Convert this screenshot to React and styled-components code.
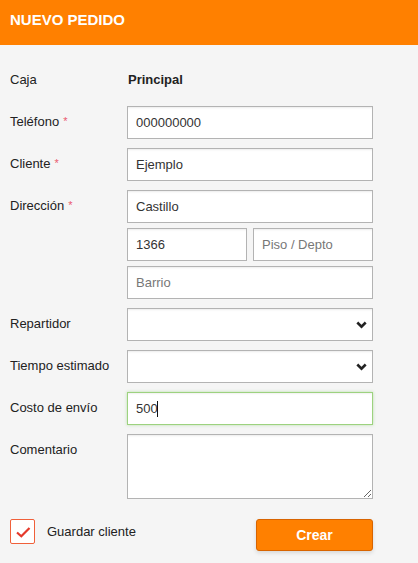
import React from "react";
import styled, { createGlobalStyle } from "styled-components";

const Global = createGlobalStyle`
  html, body { margin: 0; padding: 0; background: #f5f5f5; }
  body { font-family: "Liberation Sans", Arial, sans-serif; }
  * { box-sizing: border-box; }
`;

const Page = styled.div`
  width: 418px;
  min-height: 563px;
  background: #f5f5f5;
`;

const Header = styled.header`
  height: 45px;
  background: #ff8000;
  padding: 11px 10px 0;
`;

const Title = styled.h1`
  margin: 0;
  font-size: 15px;
  font-weight: bold;
  color: #fff;
  letter-spacing: 0;
`;

const Form = styled.form`
  padding: 19px 45px 0 10px;
  display: flex;
  flex-direction: column;
  gap: 9px;
`;

const Row = styled.div`
  display: grid;
  grid-template-columns: 117px 246px;
  align-items: start;
`;

const Label = styled.label`
  padding-top: 8px;
  font-size: 13px;
  color: #222;
`;

const Req = styled.span`
  color: #ea5a6e;
  font-size: 11px;
  margin-left: 4px;
  vertical-align: 1px;
`;

const Value = styled.div`
  padding: 8px 0 0 1px;
  height: 33px;
  font-size: 13px;
  font-weight: bold;
  color: #222;
`;

const Stack = styled.div`
  display: flex;
  flex-direction: column;
  gap: 5px;
`;

const Pair = styled.div`
  display: grid;
  grid-template-columns: 120px 120px;
  gap: 6px;
`;

const Field = styled.input`
  width: 100%;
  height: 33px;
  padding: 0 8px;
  border: 1px solid ${(p) => (p.$focus ? "#9dd27f" : "#b3b3b3")};
  background: #fff;
  box-shadow: ${(p) =>
    p.$focus
      ? "0 0 3px rgba(120, 200, 90, 0.45), inset 0 2px 2px -1px rgba(0,0,0,0.06)"
      : "inset 0 3px 2px -2px rgba(0,0,0,0.08)"};
  font-family: "Liberation Sans", Arial, sans-serif;
  font-size: 13px;
  color: #333;
  outline: none;
  border-radius: 0;
  &::placeholder { color: #777; }
`;

const FieldWrap = styled.div`
  position: relative;
`;

const Caret = styled.span`
  position: absolute;
  left: 30px;
  top: 9px;
  width: 1px;
  height: 16px;
  background: #111;
`;

const Select = styled.select`
  width: 100%;
  height: 33px;
  padding: 0 8px;
  border: 1px solid #b3b3b3;
  background: #fff;
  box-shadow: inset 0 3px 2px -2px rgba(0,0,0,0.08);
  appearance: none;
  -webkit-appearance: none;
  border-radius: 0;
  font-family: "Liberation Sans", Arial, sans-serif;
  font-size: 13px;
  outline: none;
`;

const Chevron = styled.svg`
  position: absolute;
  right: 6px;
  top: 13px;
  width: 11px;
  height: 8px;
  pointer-events: none;
`;

const Area = styled.textarea`
  width: 100%;
  height: 65px;
  display: block;
  border: 1px solid #b3b3b3;
  background: #fff;
  box-shadow: inset 0 3px 2px -2px rgba(0,0,0,0.08);
  resize: both;
  font-family: "Liberation Sans", Arial, sans-serif;
  font-size: 13px;
  outline: none;
  border-radius: 0;
`;

const Footer = styled.div`
  display: flex;
  justify-content: space-between;
  align-items: flex-start;
  margin-top: 11px;
`;

const Check = styled.label`
  display: flex;
  align-items: center;
  gap: 12px;
  font-size: 13px;
  color: #222;
`;

const Box = styled.span`
  width: 25px;
  height: 25px;
  border: 1px solid #f0603a;
  border-radius: 2px;
  background: #fff;
  display: flex;
  align-items: center;
  justify-content: center;
`;

const Button = styled.button`
  width: 117px;
  height: 32px;
  background: #ff8000;
  border: 1px solid #d86400;
  border-radius: 3px;
  box-shadow: 0 2px 4px rgba(0,0,0,0.12);
  color: #fff;
  font-family: "Liberation Sans", Arial, sans-serif;
  font-size: 14px;
  font-weight: bold;
  padding: 0;
`;

const Chev = () => (
  <Chevron viewBox="0 0 11 8">
    <path d="M1.3 1.5 L5.5 5.6 L9.7 1.5" fill="none" stroke="#222" strokeWidth="2.6" />
  </Chevron>
);

export default function App() {
  return (
    <Page>
      <Global />
      <Header>
        <Title>NUEVO PEDIDO</Title>
      </Header>
      <Form onSubmit={(e) => e.preventDefault()}>
        <Row>
          <Label>Caja</Label>
          <Value>Principal</Value>
        </Row>
        <Row>
          <Label>Teléfono<Req>*</Req></Label>
          <Field defaultValue="000000000" />
        </Row>
        <Row>
          <Label>Cliente<Req>*</Req></Label>
          <Field defaultValue="Ejemplo" />
        </Row>
        <Row>
          <Label>Dirección<Req>*</Req></Label>
          <Stack>
            <Field defaultValue="Castillo" />
            <Pair>
              <Field defaultValue="1366" />
              <Field placeholder="Piso / Depto" />
            </Pair>
            <Field placeholder="Barrio" />
          </Stack>
        </Row>
        <Row>
          <Label>Repartidor</Label>
          <FieldWrap>
            <Select defaultValue=""><option value=""></option></Select>
            <Chev />
          </FieldWrap>
        </Row>
        <Row>
          <Label>Tiempo estimado</Label>
          <FieldWrap>
            <Select defaultValue=""><option value=""></option></Select>
            <Chev />
          </FieldWrap>
        </Row>
        <Row>
          <Label>Costo de envío</Label>
          <FieldWrap>
            <Field $focus defaultValue="500" />
            <Caret />
          </FieldWrap>
        </Row>
        <Row>
          <Label>Comentario</Label>
          <Area />
        </Row>
        <Footer>
          <Check>
            <Box>
              <svg width="16" height="12" viewBox="0 0 16 12">
                <path d="M2 6.5 L6.3 10.3 L14.5 2" fill="none" stroke="#e5392b" strokeWidth="2.2" />
              </svg>
            </Box>
            Guardar cliente
          </Check>
          <Button type="submit">Crear</Button>
        </Footer>
      </Form>
    </Page>
  );
}
